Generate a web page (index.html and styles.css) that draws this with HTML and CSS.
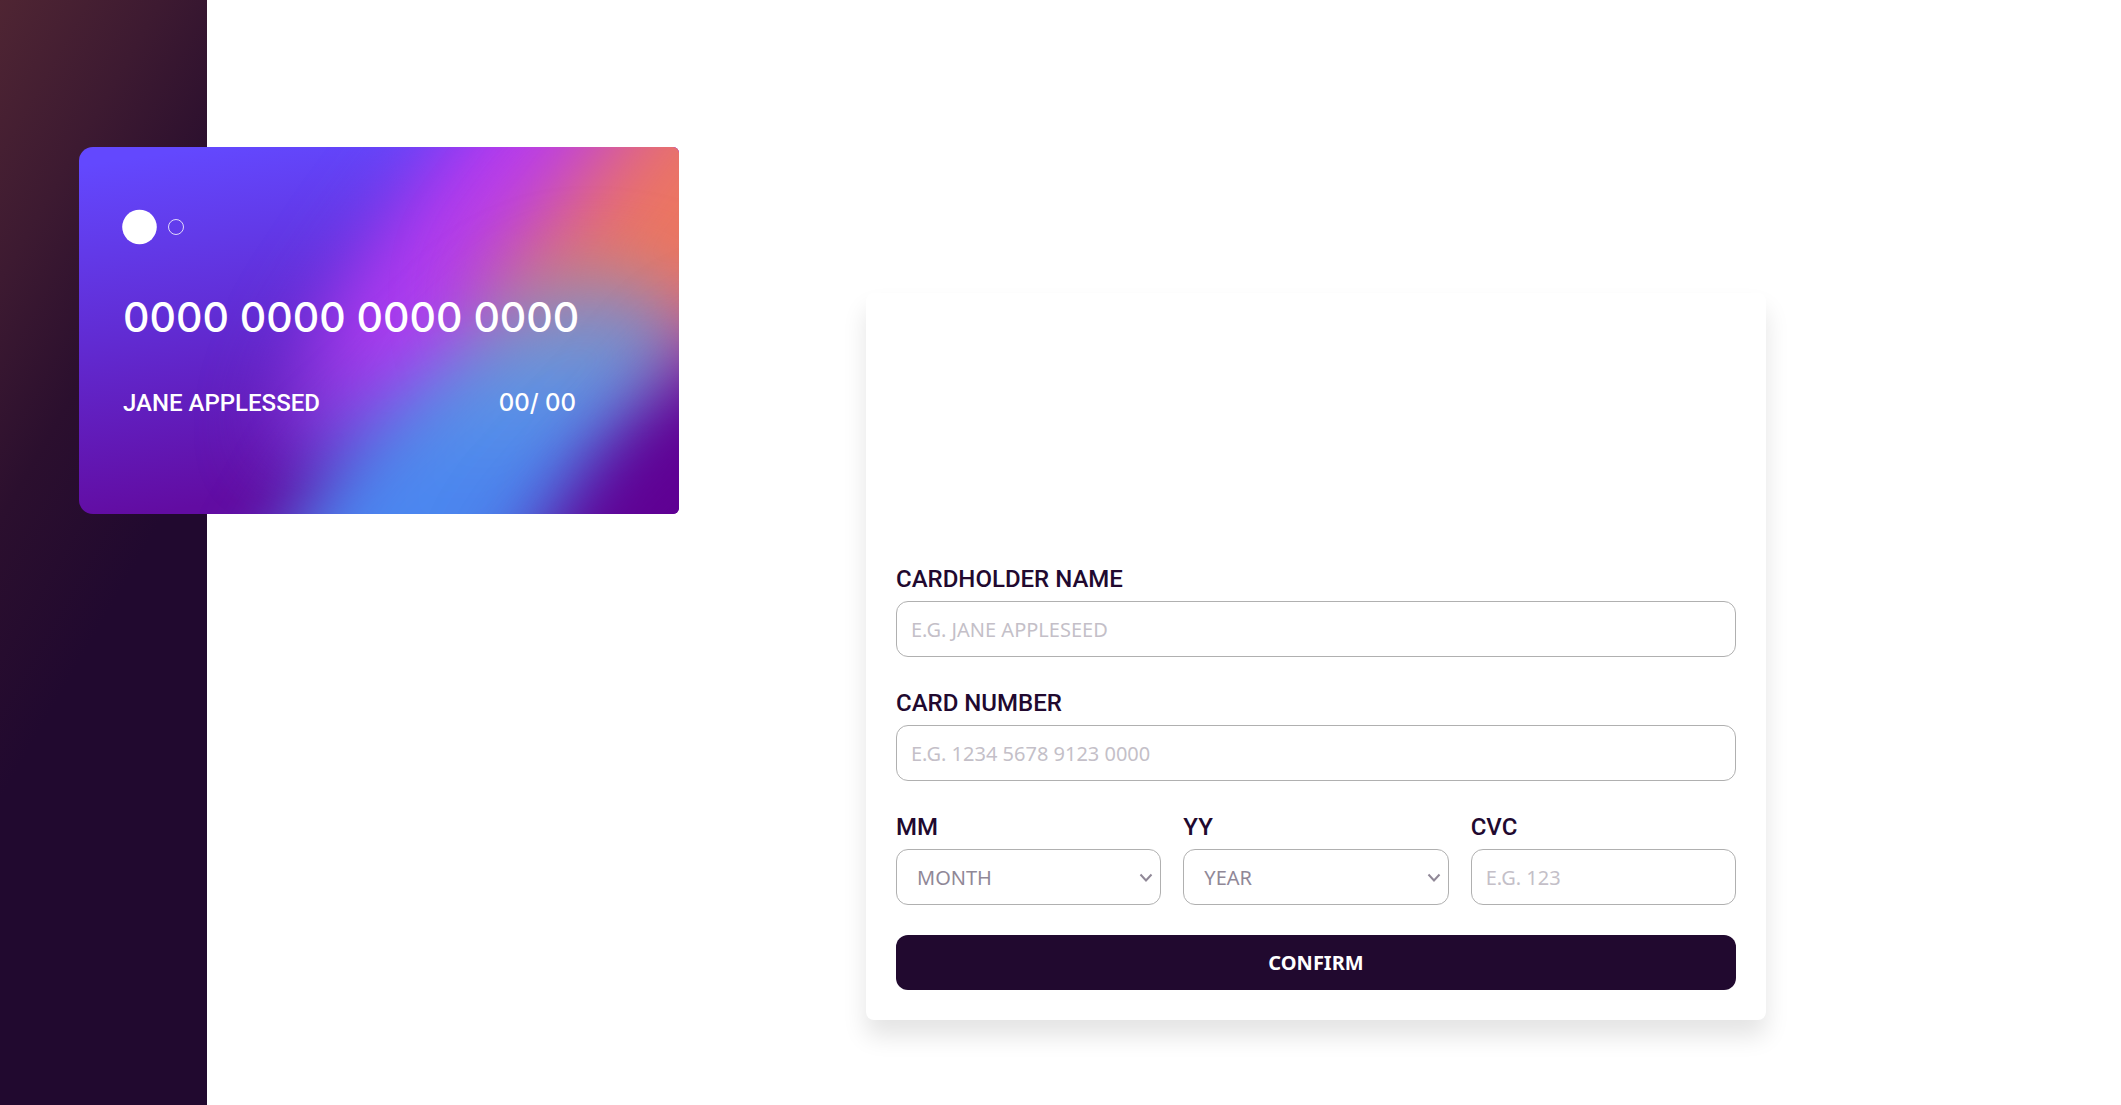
FILE: index.html
```html
<!DOCTYPE html>
<html lang="en">
<head>
<meta charset="utf-8">
<meta name="viewport" content="width=device-width, initial-scale=1">
<title>Card details</title>
<link rel="stylesheet" href="styles.css">
</head>
<body>
<div class="page">
  <aside class="panel">
    <section class="card" aria-label="Card preview">
      <svg class="card-art" viewBox="0 0 600 367" preserveAspectRatio="none" aria-hidden="true">
        <defs>
          <linearGradient id="base" gradientUnits="userSpaceOnUse" x1="60" y1="10" x2="110" y2="360">
            <stop offset="0" stop-color="#6348fe"/>
            <stop offset="0.5" stop-color="#612bd2"/>
            <stop offset="1" stop-color="#620ca2"/>
          </linearGradient>
          <linearGradient id="band" gradientUnits="userSpaceOnUse" x1="400" y1="0" x2="240" y2="270">
            <stop offset="0" stop-color="#b83af0"/>
            <stop offset="0.7" stop-color="#aa3cf0"/>
            <stop offset="1" stop-color="#8038d8"/>
          </linearGradient>
          <linearGradient id="blue" gradientUnits="userSpaceOnUse" x1="0" y1="100" x2="0" y2="340">
            <stop offset="0" stop-color="#b87c90"/>
            <stop offset="0.3" stop-color="#8890c0"/>
            <stop offset="0.6" stop-color="#5c94e6"/>
            <stop offset="1" stop-color="#4b86f0"/>
          </linearGradient>
          <filter id="soft" filterUnits="userSpaceOnUse" x="-300" y="-300" width="1200" height="1000" color-interpolation-filters="sRGB">
            <feGaussianBlur stdDeviation="36"/>
          </filter>
          <filter id="softer" filterUnits="userSpaceOnUse" x="-300" y="-300" width="1200" height="1000" color-interpolation-filters="sRGB">
            <feGaussianBlur stdDeviation="48"/>
          </filter>
        </defs>
        <rect width="600" height="367" fill="url(#base)"/>
        <path filter="url(#soft)" d="M470 -120 L365 0 L290 100 L230 190 L190 290 L320 330 L500 200 L700 200 L860 -120Z" fill="url(#band)"/>
        <path filter="url(#softer)" d="M640 -160 L510 20 L410 150 L440 210 L560 220 L800 190 L800 -160Z" fill="#ec7660"/>
        <path filter="url(#soft)" d="M500 120 L430 150 L335 240 L250 320 L150 500 L440 500 L520 320 L610 220 L580 135Z" fill="url(#blue)"/>
        <path filter="url(#softer)" d="M800 160 L640 210 L540 320 L460 410 L400 560 L800 560Z" fill="#5f0092"/>
      </svg>
      <svg class="card-logo" width="56" height="36" viewBox="0 0 56 36" aria-hidden="true">
        <circle cx="16.500" cy="18" r="17.300" fill="#fff"/>
        <circle cx="53" cy="18" r="7.500" fill="none" stroke="#fff" stroke-opacity="0.800"/>
      </svg>
      <p class="card-number">0000 0000 0000 0000</p>
      <div class="card-meta"><span class="card-name">JANE APPLESSED</span><span>00/ 00</span></div>
    </section>
  </aside>
  <main class="content">
    <form class="form">
      <div class="field">
        <label for="name">CARDHOLDER NAME</label>
        <input id="name" type="text" placeholder="E.G. JANE APPLESEED">
      </div>
      <div class="field">
        <label for="number">CARD NUMBER</label>
        <input id="number" type="text" placeholder="E.G. 1234 5678 9123 0000">
      </div>
      <div class="row">
        <div class="field">
          <label for="month">MM</label>
          <div class="select">
            <select id="month"><option>MONTH</option></select>
            <svg class="chevron" width="14" height="10" viewBox="0 0 14 10" aria-hidden="true"><path d="M1.500 1.500 L7 7.500 L12.500 1.500"/></svg>
          </div>
        </div>
        <div class="field">
          <label for="year">YY</label>
          <div class="select">
            <select id="year"><option>YEAR</option></select>
            <svg class="chevron" width="14" height="10" viewBox="0 0 14 10" aria-hidden="true"><path d="M1.500 1.500 L7 7.500 L12.500 1.500"/></svg>
          </div>
        </div>
        <div class="field">
          <label for="cvc">CVC</label>
          <input id="cvc" type="text" placeholder="E.G. 123">
        </div>
      </div>
      <button class="confirm" type="submit">CONFIRM</button>
    </form>
  </main>
</div>
</body>
</html>
```
FILE: styles.css
```css
* { box-sizing: border-box; }

body {
  margin: 0;
  background: #fff;
  color: #21092f;
  font-family: Inter, "Liberation Sans", sans-serif;
}

.page {
  display: flex;
  min-height: 100vh;
}

.panel {
  position: relative;
  flex: 0 0 207px;
  background: linear-gradient(120deg, #4f2533 0, #3d1a31 140px, #2b0f2e 260px, #21092f 400px);
}

/* The card overlaps the panel and the page beside it. */
.card {
  position: absolute;
  top: 147px;
  left: 79px;
  display: flex;
  flex-direction: column;
  width: 600px;
  height: 367px;
  padding: 62px 103px 0 44px;
  border-radius: 14px 6px 6px 14px;
  overflow: hidden;
  color: #fff;
}

.card-art {
  position: absolute;
  inset: 0;
  width: 100%;
  height: 100%;
}

.card-logo {
  position: relative;
  flex: none;
  overflow: visible;
}

.card-number {
  position: relative;
  margin: 48px 0 0;
  font-size: 41px;
  font-weight: 500;
  line-height: 48px;
  white-space: nowrap;
}

.card-meta {
  position: relative;
  display: flex;
  justify-content: space-between;
  margin-top: 46px;
  font-size: 24px;
  font-weight: 500;
  line-height: 32px;
}

.card-name,
label {
  font-family: Roboto, sans-serif;
}

.content {
  display: flex;
  flex: 1;
  align-items: flex-start;
  justify-content: center;
  padding: 293px 0 85px 304px;
}

.form {
  display: flex;
  flex-direction: column;
  gap: 30px;
  width: 100%;
  max-width: 900px;
  padding: 270px 30px 30px;
  border-radius: 8px;
  background: #fff;
  box-shadow: 0 16px 24px rgba(0, 0, 0, 0.11);
}

.row {
  display: grid;
  grid-template-columns: repeat(3, 1fr);
  gap: 22px;
}

.field {
  display: flex;
  flex-direction: column;
  gap: 6px;
}

label {
  font-size: 24px;
  font-weight: 500;
  line-height: 32px;
}

input,
select {
  width: 100%;
  height: 56px;
  padding: 0 14px;
  border: 1px solid #b0b0b0;
  border-radius: 12px;
  background: #fff;
  color: #908897;
  font-family: "Noto Sans", sans-serif;
  font-size: 20px;
}

input::placeholder {
  color: #c4bfc8;
  opacity: 1;
}

select {
  padding: 0 40px 0 20px;
  appearance: none;
}

.select { position: relative; }

.chevron {
  position: absolute;
  top: 24px;
  right: 8px;
  fill: none;
  stroke: #908897;
  stroke-width: 2;
  pointer-events: none;
}

.confirm {
  height: 55px;
  border: 0;
  border-radius: 12px;
  background: #21092f;
  color: #fff;
  font-family: "Noto Sans", sans-serif;
  font-size: 20px;
  font-weight: 700;
}
```
